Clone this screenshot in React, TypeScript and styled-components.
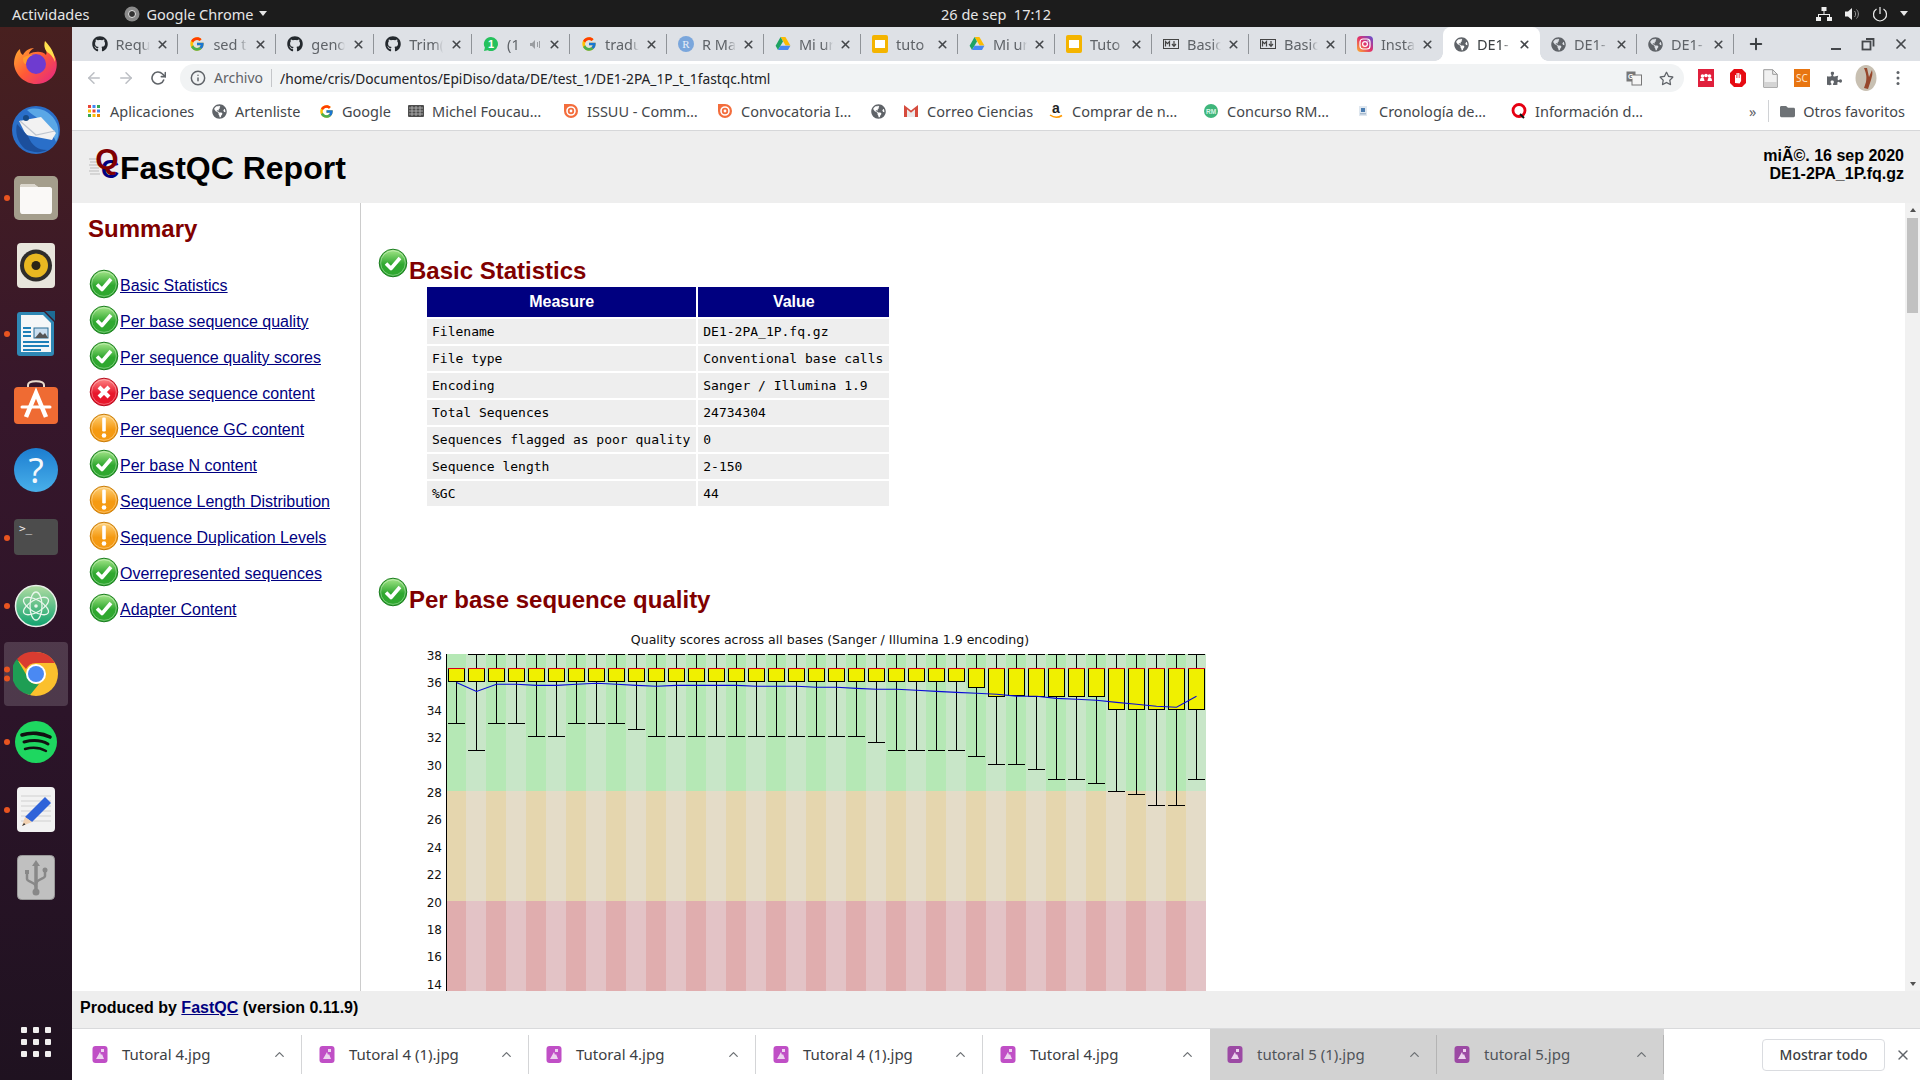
import React from "react";
import styled, { createGlobalStyle } from "styled-components";
import { FaGithub, FaGlobeAmericas, FaPuzzlePiece, FaFolder, FaRegStar } from "react-icons/fa";
import { FcGoogle } from "react-icons/fc";
import { FiArrowLeft, FiArrowRight, FiRotateCw, FiInfo, FiX, FiPlus, FiChevronUp } from "react-icons/fi";

const UI_FONT = `"Noto Sans", "Open Sans", sans-serif`;
const DOC_FONT = `"Liberation Sans", Arial, sans-serif`;

const GlobalStyle = createGlobalStyle`
  html, body { margin: 0; padding: 0; overflow: hidden; background: #fff; }
  * { box-sizing: border-box; }
`;

const Screen = styled.div`
  width: 1920px;
  height: 1080px;
  display: flex;
  flex-direction: column;
  overflow: hidden;
  font-family: ${UI_FONT};
`;

const TopBar = styled.div`
  height: 27px;
  flex: none;
  background: #1c1c1c;
  color: #e6e6e6;
  font-size: 14.5px;
  display: grid;
  grid-template-columns: 1fr auto 1fr;
  align-items: center;
  padding: 0 12px;
`;

const TopLeft = styled.div`
  display: flex;
  align-items: center;
`;

const TopApp = styled.div`
  display: flex;
  align-items: center;
  gap: 6px;
  margin-left: 35px;
`;

const Caret = styled.span`
  width: 0;
  height: 0;
  border-left: 4.5px solid transparent;
  border-right: 4.5px solid transparent;
  border-top: 5px solid #e6e6e6;
`;

const Clock = styled.span`
  margin-left: 72px;
`;

const TopRight = styled.div`
  display: flex;
  align-items: center;
  justify-content: flex-end;
  gap: 12px;
`;

const Body = styled.div`
  flex: 1;
  display: flex;
  min-height: 0;
`;

const Dock = styled.nav`
  width: 72px;
  flex: none;
  display: flex;
  flex-direction: column;
  padding-top: 1px;
  background: linear-gradient(180deg, #48201f 0%, #37172b 35%, #2c1429 65%, #1f1220 100%);
`;

const DockSlot = styled.div`
  position: relative;
  height: 68px;
  flex: none;
  display: flex;
  align-items: center;
  justify-content: center;
`;

const DockActive = styled(DockSlot)`
  &::before {
    content: "";
    position: absolute;
    left: 4px;
    right: 4px;
    top: 2px;
    bottom: 2px;
    border-radius: 4px;
    background: rgba(255, 255, 255, 0.16);
  }
  svg {
    position: relative;
  }
`;

const RunDots = styled.div`
  position: absolute;
  left: 4px;
  top: 50%;
  transform: translateY(-50%);
  display: flex;
  flex-direction: column;
  gap: 3px;
  z-index: 1;
`;

const RunDot = styled.span`
  width: 6px;
  height: 6px;
  border-radius: 50%;
  background: #e95420;
`;

const AppGrid = styled.div`
  margin-top: auto;
  margin-bottom: 23px;
  margin-left: 21px;
  display: grid;
  grid-template-columns: repeat(3, 6px);
  gap: 6px;
  span {
    width: 6px;
    height: 6px;
    border-radius: 1px;
    background: #f1efef;
  }
`;

const Browser = styled.div`
  flex: 1;
  min-width: 0;
  display: flex;
  flex-direction: column;
`;

const TabStrip = styled.div`
  height: 34px;
  flex: none;
  background: #dee1e6;
  display: flex;
  align-items: stretch;
  padding-left: 8.5px;
`;

const Tab = styled.div<{ $active?: boolean; $sep?: boolean; $w: number }>`
  position: relative;
  width: ${(p) => p.$w}px;
  flex: none;
  display: flex;
  align-items: center;
  padding-left: 11px;
  color: ${(p) => (p.$active ? "#3c4043" : "#5f6368")};
  background: ${(p) => (p.$active ? "#fff" : "transparent")};
  border-radius: 8px 8px 0 0;
  &::before {
    content: "";
    display: ${(p) => (p.$active ? "block" : "none")};
    position: absolute;
    left: -8px;
    right: -8px;
    bottom: 0;
    height: 8px;
    background:
      radial-gradient(circle at 0 0, transparent 7.5px, #fff 8px) left bottom / 8px 8px no-repeat,
      radial-gradient(circle at 100% 0, transparent 7.5px, #fff 8px) right bottom / 8px 8px no-repeat;
  }
  &::after {
    content: "";
    display: ${(p) => (p.$sep ? "block" : "none")};
    position: absolute;
    right: 0;
    top: 7px;
    bottom: 7px;
    width: 1px;
    background: #8f9398;
  }
`;

const TabTitle = styled.span`
  width: 34px;
  margin-left: 8px;
  font-size: 14.5px;
  white-space: nowrap;
  overflow: hidden;
  -webkit-mask-image: linear-gradient(90deg, #000 75%, transparent 100%);
  mask-image: linear-gradient(90deg, #000 75%, transparent 100%);
`;

const TabClose = styled(FiX)`
  position: absolute;
  left: 75.5px;
  top: 11px;
  width: 13px;
  height: 13px;
  stroke-width: 3;
  color: #44474b;
`;

const TabSound = styled.span`
  position: absolute;
  left: 58px;
  top: 12px;
  color: #9a9da1;
  display: flex;
`;

const NewTab = styled(FiPlus)`
  width: 18px;
  height: 18px;
  stroke-width: 2.6;
  color: #3c4043;
  align-self: center;
  margin-left: 13px;
`;

const WindowControls = styled.div`
  margin-left: auto;
  display: flex;
  align-items: center;
  gap: 18px;
  padding-right: 11px;
  color: #3c4043;
`;

const Toolbar = styled.div`
  height: 34px;
  flex: none;
  background: #fff;
  display: flex;
  align-items: center;
  padding: 0 6px;
  color: #5f6368;
`;

const ToolButton = styled.div<{ $muted?: boolean }>`
  width: 32px;
  height: 28px;
  flex: none;
  display: flex;
  align-items: center;
  justify-content: center;
  color: ${(p) => (p.$muted ? "#bcbfc4" : "#5f6368")};
`;

const AddressBar = styled.div`
  flex: 1;
  height: 28px;
  margin: 0 6px;
  border-radius: 14px;
  background: #f1f3f4;
  display: flex;
  align-items: center;
  padding: 0 2px 0 10px;
  font-size: 14px;
  min-width: 0;
`;

const Scheme = styled.span`
  margin-left: 8px;
  color: #5f6368;
  padding-right: 8px;
  border-right: 1px solid #c4c6c9;
  line-height: 18px;
`;

const Url = styled.span`
  margin-left: 8px;
  font-size: 13.75px;
  color: #202124;
  white-space: nowrap;
`;

const AddressEnd = styled.div`
  margin-left: auto;
  display: flex;
  align-items: center;
`;

const Bookmarks = styled.div`
  height: 36px;
  flex: none;
  background: #fff;
  border-bottom: 1px solid #d6d7d9;
  display: flex;
  align-items: center;
  padding: 0 15px 3px 14px;
  font-size: 14.5px;
  color: #44474b;
`;

const Bookmark = styled.div<{ $w: number }>`
  width: ${(p) => p.$w}px;
  flex: none;
  display: flex;
  align-items: center;
  gap: 8px;
  white-space: nowrap;
`;

const BookmarkEnd = styled.div`
  margin-left: auto;
  display: flex;
  align-items: center;
  white-space: nowrap;
  gap: 8px;
`;

const MoreMarks = styled.span`
  padding-right: 12px;
  margin-right: 3px;
  border-right: 1px solid #d0d2d5;
  line-height: 22px;
  color: #5f6368;
`;

const ReportHeader = styled.header`
  height: 72px;
  flex: none;
  background: #eee;
  display: flex;
  justify-content: space-between;
  font-family: ${DOC_FONT};
  color: #000;
  padding: 0 16px;
`;

const ReportTitle = styled.h1`
  margin: 0;
  padding-top: 18px;
  font-size: 32px;
  line-height: 38px;
  font-weight: bold;
  display: flex;
  align-items: flex-start;
`;

const LogoMark = styled.svg`
  width: 32px;
  height: 38px;
  margin-top: -2px;
  flex: none;
  overflow: visible;
`;

const ReportMeta = styled.div`
  padding-top: 16px;
  font-size: 16px;
  line-height: 18px;
  font-weight: bold;
  text-align: right;
`;

const Content = styled.div`
  flex: 1;
  min-height: 0;
  display: flex;
  background: #fff;
  font-family: ${DOC_FONT};
`;

const Summary = styled.aside`
  width: 289px;
  flex: none;
  border-right: 1px solid #ccc;
  padding: 12px 0 0 16px;
`;

const SummaryTitle = styled.h2`
  margin: 0 0 27px;
  font-size: 24px;
  line-height: 28px;
  font-weight: bold;
  color: #800000;
`;

const SummaryList = styled.ul`
  list-style: none;
  margin: 0;
  padding: 0;
  display: flex;
  flex-direction: column;
  gap: 7px;
`;

const SummaryRow = styled.li`
  height: 29px;
  padding-left: 1px;
  display: flex;
  align-items: flex-end;
  gap: 1px;
`;

const DocLink = styled.a`
  color: #000080;
  text-decoration: underline;
  font-size: 16px;
  line-height: 18px;
  margin-bottom: 4px;
`;

const Main = styled.main`
  flex: 1;
  min-width: 0;
  overflow: hidden;
  padding: 45px 0 0 17px;
`;

const Heading = styled.h2`
  margin: 0;
  height: 36px;
  display: flex;
  align-items: flex-start;
  gap: 1px;
  font-size: 24px;
  line-height: 28px;
  font-weight: bold;
  color: #800000;
  span {
    margin-top: 9px;
  }
`;

const StatsTable = styled.table`
  margin: 1px 0 69px 47px;
  border-spacing: 2px;
  border-collapse: separate;
  th {
    background: #000080;
    color: #fff;
    font-size: 16px;
    font-weight: bold;
    height: 30px;
    padding: 0 5px;
    line-height: 18px;
  }
  td {
    background: #eee;
    font-family: "DejaVu Sans Mono", monospace;
    font-size: 13px;
    height: 25px;
    padding: 0 6px 0 5px;
    line-height: 15px;
    white-space: nowrap;
  }
`;

const ChartFrame = styled.svg`
  display: block;
  margin: 7px 0 0 27px;
  width: 810px;
  height: 400px;
  font-family: "DejaVu Sans", sans-serif;
`;

const Scrollbar = styled.div`
  width: 15px;
  flex: none;
  background: #f1f1f1;
  display: flex;
  flex-direction: column;
  align-items: center;
  position: relative;
`;

const ScrollThumb = styled.div`
  width: 11px;
  height: 95px;
  margin-top: 15px;
  background: #c1c1c1;
`;

const ScrollArrow = styled.span<{ $down?: boolean }>`
  position: absolute;
  ${(p) => (p.$down ? "bottom: 5px;" : "top: 5px;")}
  width: 0;
  height: 0;
  border-left: 3.5px solid transparent;
  border-right: 3.5px solid transparent;
  ${(p) => (p.$down ? "border-top: 4px solid #505050;" : "border-bottom: 4px solid #505050;")}
`;

const ReportFooter = styled.footer`
  height: 38px;
  flex: none;
  background: #eee;
  border-bottom: 1px solid #d9dadc;
  font-family: ${DOC_FONT};
  font-size: 16px;
  font-weight: bold;
  color: #000;
  padding: 8px 0 0 8px;
  line-height: 18px;
  a {
    color: #000080;
  }
`;

const Shelf = styled.div`
  height: 51px;
  flex: none;
  background: #fff;
  display: flex;
  align-items: stretch;
  padding-left: 3px;
  font-size: 15px;
`;

const ShelfItem = styled.div<{ $dim?: boolean; $sep?: boolean }>`
  position: relative;
  width: 227px;
  flex: none;
  display: flex;
  align-items: center;
  padding-left: 17px;
  gap: 14px;
  padding-bottom: 1px;
  color: ${(p) => (p.$dim ? "#50555a" : "#3c4043")};
  background: ${(p) => (p.$dim ? "#d2d2d2" : "transparent")};
  &::after {
    content: "";
    display: ${(p) => (p.$sep ? "block" : "none")};
    position: absolute;
    right: 0;
    top: 6px;
    bottom: 6px;
    width: 1px;
    background: ${(p) => (p.$dim ? "#b4b4b4" : "#d4d5d7")};
  }
`;

const ShelfCaret = styled(FiChevronUp)`
  position: absolute;
  left: 197px;
  top: 18px;
  width: 15px;
  height: 15px;
  color: #6b6f73;
`;

const ShelfEnd = styled.div`
  margin-left: auto;
  display: flex;
  align-items: center;
  gap: 10px;
  padding-right: 9px;
`;

const ShowAll = styled.button`
  width: 123px;
  height: 32px;
  border: 1px solid #dadce0;
  border-radius: 4px;
  background: #fff;
  color: #3c4043;
  font-family: ${UI_FONT};
  font-size: 14px;
  font-weight: 500;
  padding: 0;
`;

const G = ({ size = 16 }: { size?: number }) => <FcGoogle size={size} />;

const Globe = ({ color = "#5f6368" }: { color?: string }) => <FaGlobeAmericas size={15} color={color} />;

const DriveIcon = () => (
  <svg width="16" height="16" viewBox="0 0 16 16">
    <path d="M5.6 1h4.8l5 8.6h-4.8z" fill="#fbbc04" />
    <path d="M5.6 1 .6 9.7 3 14l5-8.6z" fill="#1ea362" />
    <path d="M5.5 9.7h9.9L13 14H3z" fill="#4688f4" />
  </svg>
);

const SlidesIcon = () => (
  <svg width="16" height="18" viewBox="0 0 16 18">
    <rect width="16" height="18" rx="2" fill="#f4b400" />
    <rect x="3" y="5" width="10" height="8" fill="#fff" />
  </svg>
);

const MarkdownIcon = () => (
  <svg width="16" height="16" viewBox="0 0 16 16" fill="none">
    <rect x=".5" y="3.5" width="15" height="9" stroke="#444" />
    <path d="M2.5 10.5v-5l2 2.2 2-2.2v5" stroke="#444" strokeWidth="1.2" />
    <path d="M11 5v5M9 8l2 2.3L13 8" stroke="#444" strokeWidth="1.2" />
  </svg>
);

const InstagramIcon = () => (
  <svg width="16" height="16" viewBox="0 0 16 16" fill="none">
    <defs>
      <linearGradient id="ig" x1="0" y1="1" x2="1" y2="0">
        <stop offset="0" stopColor="#fdb42f" />
        <stop offset=".5" stopColor="#e1306c" />
        <stop offset="1" stopColor="#5b51d8" />
      </linearGradient>
    </defs>
    <rect width="16" height="16" rx="4" fill="url(#ig)" />
    <rect x="3" y="3" width="10" height="10" rx="3" stroke="#fff" strokeWidth="1.2" />
    <circle cx="8" cy="8" r="2.4" stroke="#fff" strokeWidth="1.2" />
    <circle cx="11" cy="5" r=".7" fill="#fff" />
  </svg>
);

const WhatsIcon = () => (
  <svg width="16" height="16" viewBox="0 0 16 16">
    <path d="M8 1a7 7 0 1 1-3.3 13.2L1 15l.9-3.4A7 7 0 0 1 8 1z" fill="#25c15c" />
    <text x="8" y="12" fontSize="11" fontWeight="bold" fontFamily="Liberation Sans" textAnchor="middle" fill="#fff">1</text>
  </svg>
);

const RIcon = () => (
  <svg width="16" height="16" viewBox="0 0 16 16">
    <circle cx="8" cy="8" r="8" fill="#7aa6dc" />
    <text x="8" y="12" fontSize="11" fontFamily="Liberation Serif" textAnchor="middle" fill="#e8eef8">R</text>
  </svg>
);

const ImageFileIcon = ({ dim }: { dim?: boolean }) => (
  <svg width="16" height="17" viewBox="0 0 16 17">
    <rect x=".5" width="15" height="17" rx="3" fill={dim ? "#9c4aa4" : "#c04fc6"} />
    <path d="M4 13 8 6l1 3 1-1 2 5z" fill="#ecd3ee" />
    <rect x="9" y="3" width="3" height="3" fill="#ecd3ee" />
  </svg>
);

type TabData = { title: string; icon: React.ReactNode; sep?: boolean; active?: boolean; sound?: boolean };

const tabs: TabData[] = [
  { title: "Requ", icon: <FaGithub size={16} color="#24292e" />, sep: true },
  { title: "sed t", icon: <G />, sep: true },
  { title: "geno", icon: <FaGithub size={16} color="#24292e" />, sep: true },
  { title: "Trim(", icon: <FaGithub size={16} color="#24292e" />, sep: true },
  { title: "(1", icon: <WhatsIcon />, sep: true, sound: true },
  { title: "tradu", icon: <G />, sep: true },
  { title: "R Ma", icon: <RIcon />, sep: true },
  { title: "Mi ur", icon: <DriveIcon />, sep: true },
  { title: "tuto", icon: <SlidesIcon />, sep: true },
  { title: "Mi ur", icon: <DriveIcon />, sep: true },
  { title: "Tuto", icon: <SlidesIcon />, sep: true },
  { title: "Basic", icon: <MarkdownIcon />, sep: true },
  { title: "Basic", icon: <MarkdownIcon />, sep: true },
  { title: "Insta", icon: <InstagramIcon /> },
  { title: "DE1-", icon: <Globe />, active: true },
  { title: "DE1-", icon: <Globe />, sep: true },
  { title: "DE1-", icon: <Globe />, sep: true },
];

const IssuuIcon = () => (
  <svg width="16" height="18" viewBox="0 0 16 18" fill="none">
    <path d="M1 2h7a7 7 0 1 1-7 7z" fill="#f36d3c" />
    <circle cx="8" cy="9" r="4" stroke="#fff" strokeWidth="1.6" />
    <circle cx="8" cy="9" r="1.4" fill="#fff" />
  </svg>
);

const marks: { w: number; label?: string; icon: React.ReactNode }[] = [
  {
    w: 126,
    label: "Aplicaciones",
    icon: (
      <svg width="16" height="16" viewBox="0 0 16 16">
        {[0, 1, 2].map((r) =>
          [0, 1, 2].map((c) => (
            <rect
              key={`${r}${c}`}
              x={2 + c * 4.5}
              y={2 + r * 4.5}
              width="3"
              height="3"
              fill={["#ea4335", "#4285f4", "#34a853", "#fbbc04", "#ea4335", "#4285f4", "#34a853", "#fbbc04", "#ea8600"][r * 3 + c]}
            />
          ))
        )}
      </svg>
    ),
  },
  { w: 107, label: "Artenliste", icon: <Globe /> },
  { w: 89, label: "Google", icon: <G size={15} /> },
  {
    w: 155,
    label: "Michel Foucau…",
    icon: (
      <svg width="16" height="12" viewBox="0 0 16 12">
        <rect width="16" height="12" rx="1" fill="#4d4d4d" />
        <path d="M1 3h14M1 6h14M1 9h14M4 1v10M8 1v10M12 1v10" stroke="#bbb" strokeWidth=".8" />
      </svg>
    ),
  },
  { w: 154, label: "ISSUU - Comm…", icon: <IssuuIcon /> },
  { w: 154, label: "Convocatoria I…", icon: <IssuuIcon /> },
  { w: 32, icon: <Globe /> },
  {
    w: 145,
    label: "Correo Ciencias",
    icon: (
      <svg width="16" height="14" viewBox="0 0 16 14">
        <path d="M1 1v12h3V5.500L8 9l4-3.500V13h3V1L8 6.500z" fill="#d54b3d" />
        <path d="M4 13V5.500L8 9l4-3.500V13z" fill="#e9e9e9" />
      </svg>
    ),
  },
  {
    w: 155,
    label: "Comprar de n…",
    icon: (
      <svg width="16" height="18" viewBox="0 0 16 18" fill="none">
        <text x="8" y="11" fontSize="14" fontWeight="bold" fontFamily="Liberation Sans" textAnchor="middle" fill="#222">a</text>
        <path d="M2 13c4 3 8 3 12 .5" stroke="#f90" strokeWidth="1.5" />
      </svg>
    ),
  },
  {
    w: 152,
    label: "Concurso RM…",
    icon: (
      <svg width="16" height="16" viewBox="0 0 16 16">
        <circle cx="8" cy="8" r="7" fill="#3fb67b" />
        <text x="8" y="10.5" fontSize="6.5" fontWeight="bold" fontFamily="Liberation Sans" textAnchor="middle" fill="#d9f5e6">RM</text>
      </svg>
    ),
  },
  {
    w: 156,
    label: "Cronología de…",
    icon: (
      <svg width="16" height="12" viewBox="0 0 16 12">
        <rect x="4" y="1" width="8" height="10" fill="#dfe7ef" />
        <rect x="6" y="3" width="4" height="4" fill="#4b7db1" />
        <rect x="5" y="8" width="6" height="1.5" fill="#a9bcd0" />
      </svg>
    ),
  },
  {
    w: 132,
    label: "Información d…",
    icon: (
      <svg width="16" height="18" viewBox="0 0 16 18" fill="none">
        <circle cx="8" cy="8.5" r="6" stroke="#e60012" strokeWidth="2.8" />
        <path d="M9 12l4 4" stroke="#111" strokeWidth="2" />
      </svg>
    ),
  },
];

const Extensions = () => (
  <>
    <ToolButton>
      <svg width="16" height="18" viewBox="0 0 16 18">
        <rect width="16" height="18" fill="#e0203c" />
        <circle cx="4.5" cy="7" r="1.8" fill="#fff" />
        <circle cx="8" cy="6.5" r="1.8" fill="#fff" />
        <circle cx="11.5" cy="7" r="1.8" fill="#fff" />
        <path d="M2 12c0-3 1-3.500 2.500-3.500S6 10 6.500 12h3C10 10 10 8.500 11.500 8.500S14 9 14 12z" fill="#fff" />
      </svg>
    </ToolButton>
    <ToolButton>
      <svg width="18" height="20" viewBox="0 0 18 20">
        <path d="M5 1h8l4 4v10l-4 4H5l-4-4V5z" fill="#e60b12" />
        <path d="M6 15V7h1v3h.5V5h1.200v5h.5V5h1.200v5h.5V6.500h1.200V13l-1.500 2.500z" fill="#fff" />
      </svg>
    </ToolButton>
    <ToolButton>
      <svg width="15" height="19" viewBox="0 0 15 19" fill="none">
        <path d="M.7.700h9l4.600 4.600v13H.7z" fill="#f1f1f1" stroke="#9a9a9a" />
        <path d="M9.700.700v4.600h4.600" stroke="#9a9a9a" />
        <rect x="1" y="13" width="13" height="5" fill="#d4d4d4" />
      </svg>
    </ToolButton>
    <ToolButton>
      <svg width="16" height="18" viewBox="0 0 16 18">
        <rect width="16" height="18" fill="#e87511" />
        <text x="8" y="13" fontSize="10" fontFamily="Noto Sans" textAnchor="middle" fill="#ffe4c8">SC</text>
      </svg>
    </ToolButton>
    <ToolButton>
      <FaPuzzlePiece size={15} color="#5f6368" />
    </ToolButton>
    <ToolButton>
      <svg width="22" height="26" viewBox="0 0 22 26" fill="none">
        <ellipse cx="11" cy="13" rx="10.5" ry="13" fill="#c8c0b2" />
        <path d="M9 3c2 5 3 8 2 14l-2 6 4 1 3-9c1-4 2-6 1-10l-3 7-2-9z" fill="#96472c" />
      </svg>
    </ToolButton>
    <ToolButton>
      <svg width="4" height="16" viewBox="0 0 4 16" fill="#5f6368">
        <circle cx="2" cy="2.5" r="1.5" />
        <circle cx="2" cy="8" r="1.5" />
        <circle cx="2" cy="13.5" r="1.5" />
      </svg>
    </ToolButton>
  </>
);

type Status = "ok" | "fail" | "warn";

const statusColors: Record<Status, [string, string, string]> = {
  ok: ["#a8e88c", "#2fa82f", "#1a7d1f"],
  fail: ["#ff8a8a", "#e8172b", "#b50d1e"],
  warn: ["#ffd27a", "#f59a12", "#c97c08"],
};

const StatusIcon = ({ kind }: { kind: Status }) => {
  const [top, mid, edge] = statusColors[kind];
  const id = `status-${kind}`;
  return (
    <svg width="30" height="30" viewBox="0 0 30 30" style={{ flex: "none" }}>
      <defs>
        <linearGradient id={id} x1="0" y1="0" x2="0" y2="1">
          <stop offset="0" stopColor={top} />
          <stop offset=".55" stopColor={mid} />
          <stop offset="1" stopColor={mid} />
        </linearGradient>
      </defs>
      <circle cx="15" cy="15" r="13.8" fill={`url(#${id})`} stroke={edge} strokeWidth="1" />
      <circle cx="15" cy="15" r="12.3" fill="none" stroke="#fff" strokeOpacity=".35" strokeWidth="1" />
      {kind === "ok" && <path d="M8 15.5l5 5 9-10.5" fill="none" stroke="#fff" strokeWidth="3.6" strokeLinejoin="round" />}
      {kind === "fail" && <path d="M10 10l10 10M20 10L10 20" fill="none" stroke="#fff" strokeWidth="4" />}
      {kind === "warn" && (
        <>
          <rect x="13.2" y="4.5" width="3.6" height="14" rx="1.2" fill="#fff" />
          <circle cx="15" cy="22.5" r="2.3" fill="#fff" />
        </>
      )}
    </svg>
  );
};

const modules: { name: string; status: Status }[] = [
  { name: "Basic Statistics", status: "ok" },
  { name: "Per base sequence quality", status: "ok" },
  { name: "Per sequence quality scores", status: "ok" },
  { name: "Per base sequence content", status: "fail" },
  { name: "Per sequence GC content", status: "warn" },
  { name: "Per base N content", status: "ok" },
  { name: "Sequence Length Distribution", status: "warn" },
  { name: "Sequence Duplication Levels", status: "warn" },
  { name: "Overrepresented sequences", status: "ok" },
  { name: "Adapter Content", status: "ok" },
];

const stats = [
  ["Filename", "DE1-2PA_1P.fq.gz"],
  ["File type", "Conventional base calls"],
  ["Encoding", "Sanger / Illumina 1.9"],
  ["Total Sequences", "24734304"],
  ["Sequences flagged as poor quality", "0"],
  ["Sequence length", "2-150"],
  ["%GC", "44"],
];

const lows = [33, 31, 33, 33, 32, 32, 33, 33, 33, 32.5, 32, 32, 32, 32, 32, 32, 32, 32, 32, 32, 32, 31.6, 31, 31, 31, 31, 30.55, 30, 30, 29.6, 28.9, 28.9, 28.55, 28, 27.75, 27, 27, 28.9];
const bottoms = [36, 36, 36, 36, 36, 36, 36, 36, 36, 36, 36, 36, 36, 36, 36, 36, 36, 36, 36, 36, 36, 36, 36, 36, 36, 36, 35.6, 34.9, 35, 34.9, 34.9, 34.9, 34.9, 34, 34, 34, 34, 34];
const means = [35.93, 35.27, 35.79, 35.79, 35.71, 35.71, 35.79, 35.86, 35.79, 35.71, 35.64, 35.71, 35.71, 35.71, 35.71, 35.64, 35.64, 35.64, 35.57, 35.57, 35.49, 35.42, 35.42, 35.35, 35.27, 35.2, 35.13, 35.06, 34.93, 34.91, 34.76, 34.69, 34.62, 34.47, 34.33, 34.18, 34.11, 34.91];

const PLOT_X = 41;
const yOf = (v: number) => 34 + (38 - v) * 13.7;

const QualityChart = () => {
  const ticks = [38, 36, 34, 32, 30, 28, 26, 24, 22, 20, 18, 16, 14];
  const line = means.map((m, i) => `${PLOT_X + 10.5 + i * 20},${yOf(m).toFixed(1)}`).join(" ");
  return (
    <ChartFrame viewBox="0 0 810 400">
      <text x="425" y="24" fontSize="12.55" textAnchor="middle" fill="#111">
        Quality scores across all bases (Sanger / Illumina 1.9 encoding)
      </text>
      <g shapeRendering="crispEdges">
        {lows.map((_, i) => (
          <g key={i}>
            <rect x={PLOT_X + i * 20} y={34} width="20" height={137} fill={i % 2 ? "#c8e6c8" : "#b5e8b5"} />
            <rect x={PLOT_X + i * 20} y={171} width="20" height={110} fill={i % 2 ? "#e4dcc8" : "#e5d6ae"} />
            <rect x={PLOT_X + i * 20} y={281} width="20" height={110} fill={i % 2 ? "#e3c3c6" : "#e0adae"} />
          </g>
        ))}
        <rect x={PLOT_X} y={34} width="1" height="366" fill="#000" />
        {lows.map((low, i) => {
          const cx = PLOT_X + 10 + i * 20;
          return (
            <g key={i} fill="#000">
              {i > 0 && <rect x={cx - 8.5} y={34} width="17" height="1" />}
              {i > 0 && <rect x={cx} y={34} width="1" height={14} />}
              <rect x={cx} y={yOf(bottoms[i])} width="1" height={yOf(low) - yOf(bottoms[i])} />
              <rect x={cx - 8.5} y={yOf(low)} width="17" height="1" />
              <rect x={cx - 8} y={48} width="17" height={yOf(bottoms[i]) - 48 + 1} fill="#000" />
              <rect x={cx - 7} y={49} width="15" height={yOf(bottoms[i]) - 49} fill="#f0f000" />
              <rect x={cx - 8} y={48} width="17" height="1" fill="#d40020" />
            </g>
          );
        })}
      </g>
      <polyline points={line} fill="none" stroke="#0a0ad8" strokeWidth="1.1" />
      {ticks.map((t) => (
        <text key={t} x={PLOT_X - 4} y={yOf(t) + 6} fontSize="12" textAnchor="end" fill="#111">
          {t}
        </text>
      ))}
    </ChartFrame>
  );
};

const DockItem = ({ dots = 0, active, children }: { dots?: number; active?: boolean; children: React.ReactNode }) => {
  const Slot = active ? DockActive : DockSlot;
  return (
    <Slot>
      {dots > 0 && (
        <RunDots>
          {Array.from({ length: dots }).map((_, i) => (
            <RunDot key={i} />
          ))}
        </RunDots>
      )}
      {children}
    </Slot>
  );
};

const FirefoxIcon = () => (
  <svg width="48" height="48" viewBox="0 0 48 48">
    <defs>
      <linearGradient id="ffx" x1="0" y1="0" x2="1" y2="1">
        <stop offset="0" stopColor="#ffbd2e" />
        <stop offset=".5" stopColor="#ff5a36" />
        <stop offset="1" stopColor="#e3218b" />
      </linearGradient>
    </defs>
    <path d="M33 3c1 5 4 7 7 11 4 5 6 11 4 18-2 8-10 14-20 14C13 46 3 37 2 26c0-6 2-12 6-15 0 3 1 5 3 6 2-4 6-7 11-7-3 2-5 4-5 6 6-3 14-3 17 1C36 13 32 8 33 3z" fill="url(#ffx)" />
    <path d="M33 3c5 5 10 12 10 21-2-5-4-8-8-10-3-4-3-7-2-11z" fill="#ffe14d" />
    <circle cx="24" cy="26" r="10" fill="#6e3bd0" />
    <path d="M14 26c0-4 3-8 7-9-3 0-6 0-10 3 0 4 1 6 3 6z" fill="#ff9a2e" />
  </svg>
);

const ThunderbirdIcon = () => (
  <svg width="50" height="48" viewBox="0 0 50 48">
    <circle cx="25" cy="24" r="24" fill="#2a6fc9" />
    <path d="M16 4c10-4 24 0 30 14 2 6 2 13-1 18-3-8-8-16-16-22C24 10 20 8 16 4z" fill="#5aa7e6" />
    <path d="M8 15l22-4 15 16-4 7-26-5z" fill="#f2f2f2" />
    <path d="M9 15l16 14 19-4" fill="none" stroke="#bfc6cf" strokeWidth="1.2" />
    <path d="M6 18c-2 8 0 18 8 25 8 4 16 4 22 1-9 0-15-4-19-14z" fill="#1c4f9c" />
    <circle cx="15" cy="12" r="3" fill="#164a86" />
  </svg>
);

const FilesIcon = () => (
  <svg width="46" height="46" viewBox="0 0 46 46">
    <rect x="1" y="1" width="44" height="44" rx="5" fill="#a49e8c" />
    <path d="M7 11c0-1 1-2 2-2h12l4 3h12c1 0 2 1 2 2v22c0 2-1 3-2 3H9c-1 0-2-1-2-3z" fill="#faf9f7" />
    <path d="M7 11c0-1 1-2 2-2h12l4 3H7z" fill="#dad6cc" />
  </svg>
);

const RhythmIcon = () => (
  <svg width="38" height="46" viewBox="0 0 38 46">
    <rect width="38" height="45" rx="4" fill="#e8e5dc" />
    <circle cx="19" cy="22.5" r="16" fill="#2f2d2b" />
    <circle cx="19" cy="22.5" r="12" fill="#e9b821" />
    <circle cx="19" cy="22.5" r="4.5" fill="#2a2416" />
  </svg>
);

const WriterIcon = () => (
  <svg width="38" height="46" viewBox="0 0 38 46">
    <path d="M3 1h24l10 10v31c0 2-1 3-3 3H3c-2 0-3-1-3-3V4c0-2 1-3 3-3z" fill="#2f88b5" />
    <path d="M4 4h22l8 8v29H4z" fill="#f5f7f8" />
    <path d="M28 0l10 10V0z" fill="#1d6c95" />
    <path d="M6 17h8M6 21h8M6 25h8M6 31h26M6 35h26M6 39h18" stroke="#1f80b8" strokeWidth="2" />
    <rect x="17" y="17" width="14" height="10" fill="#cbdff0" stroke="#2a6f96" />
    <path d="M18 27l5-6 3 3 2-2 3 5z" fill="#555" />
  </svg>
);

const SoftwareIcon = () => (
  <svg width="46" height="46" viewBox="0 0 46 46" fill="none">
    <path d="M15 10V6c0-5 16-5 16 0v4" stroke="#eadccd" strokeWidth="2" />
    <rect x="1" y="8" width="44" height="37" rx="4" fill="#ef6b33" />
    <path d="M13 38l10-24 10 24" stroke="#fff" strokeWidth="4.5" />
    <path d="M9 28h28" stroke="#fff" strokeWidth="3" strokeLinecap="round" />
  </svg>
);

const HelpIcon = () => (
  <svg width="46" height="46" viewBox="0 0 46 46">
    <defs>
      <linearGradient id="hlp" x1="0" y1="0" x2="0" y2="1">
        <stop offset="0" stopColor="#1c7dd0" />
        <stop offset="1" stopColor="#49b0ea" />
      </linearGradient>
    </defs>
    <circle cx="23" cy="23" r="22" fill="url(#hlp)" />
    <text x="23" y="36" fontSize="35" fontFamily="Noto Sans" textAnchor="middle" fill="#f4f8fb">?</text>
  </svg>
);

const TerminalIcon = () => (
  <svg width="46" height="38" viewBox="0 0 46 38">
    <rect x="1" width="44" height="36" rx="4" fill="#4c4c4c" />
    <text x="6" y="13" fontSize="11" fontFamily="DejaVu Sans Mono" fill="#f0f0f0">&gt;_</text>
  </svg>
);

const AtomIcon = () => (
  <svg width="44" height="44" viewBox="0 0 44 44" fill="none">
    <defs>
      <linearGradient id="atm" x1="0" y1="0" x2="0" y2="1">
        <stop offset="0" stopColor="#b1dca2" />
        <stop offset="1" stopColor="#0fa36f" />
      </linearGradient>
    </defs>
    <circle cx="22" cy="22" r="20.5" fill="url(#atm)" stroke="#e8efe9" strokeWidth="1.5" />
    <g stroke="#eaf6ec" strokeWidth="1.3">
      <ellipse cx="22" cy="22" rx="14" ry="6" transform="rotate(30 22 22)" />
      <ellipse cx="22" cy="22" rx="14" ry="6" transform="rotate(90 22 22)" />
      <ellipse cx="22" cy="22" rx="14" ry="6" transform="rotate(150 22 22)" />
    </g>
    <circle cx="22" cy="22" r="1.8" fill="#eaf6ec" />
  </svg>
);

const ChromeIcon = () => (
  <svg width="46" height="46" viewBox="0 0 46 46">
    <circle cx="23" cy="23" r="22" fill="#fbc02d" />
    <path d="M23 1a22 22 0 0 1 19 11H23a11 11 0 0 0-10 6L4 8a22 22 0 0 1 19-7z" fill="#d93c30" />
    <path d="M4 8l10 17a10 10 0 0 0 12 8l-9 11A22 22 0 0 1 4 8z" fill="#1e9e54" />
    <circle cx="23" cy="23" r="10" fill="#fff" />
    <circle cx="23" cy="23" r="8" fill="#4a89f3" />
  </svg>
);

const SpotifyIcon = () => (
  <svg width="44" height="44" viewBox="0 0 44 44" fill="none">
    <circle cx="22" cy="22" r="21" fill="#1ed760" />
    <path d="M8 15c9-3 20-2 28 2" stroke="#111" strokeWidth="3.6" strokeLinecap="round" />
    <path d="M10 22c8-2 17-2 24 2" stroke="#111" strokeWidth="3" strokeLinecap="round" />
    <path d="M11 29c7-2 14-2 21 2" stroke="#111" strokeWidth="2.4" strokeLinecap="round" />
  </svg>
);

const EditorIcon = () => (
  <svg width="38" height="46" viewBox="0 0 38 46" fill="none">
    <rect width="38" height="45" rx="4" fill="#f2f2f2" />
    <path d="M4 9h30M4 14h30M4 19h30M4 24h30M4 29h30M4 34h30" stroke="#d0d0d0" />
    <path d="M28 10l6 6-19 19-7-5z" fill="#2f63d9" />
    <path d="M8 30l7 5-10 4z" fill="#f1d1b1" />
    <path d="M5 39l2-3 1.5 1.5z" fill="#333" />
  </svg>
);

const UsbIcon = () => (
  <svg width="38" height="46" viewBox="0 0 38 46" fill="none">
    <rect x=".5" y=".5" width="37" height="44" rx="4" fill="#c0c0c0" stroke="#999" />
    <path d="M19 37V9" stroke="#888" strokeWidth="3.5" />
    <path d="M19 5l-4 6h8z" fill="#888" />
    <path d="M10 19v5c0 3 9 3 9 8M28 17v4c0 3-9 3-9 8" stroke="#888" strokeWidth="2.5" />
    <rect x="8" y="15" width="4" height="4" fill="#888" />
    <circle cx="28" cy="15" r="2.5" fill="#888" />
    <circle cx="19" cy="37" r="3.5" fill="#888" />
  </svg>
);

const dock: { dots?: number; active?: boolean; icon: React.ReactNode }[] = [
  { icon: <FirefoxIcon /> },
  { icon: <ThunderbirdIcon /> },
  { dots: 1, icon: <FilesIcon /> },
  { icon: <RhythmIcon /> },
  { dots: 1, icon: <WriterIcon /> },
  { icon: <SoftwareIcon /> },
  { icon: <HelpIcon /> },
  { dots: 1, icon: <TerminalIcon /> },
  { dots: 1, icon: <AtomIcon /> },
  { dots: 2, active: true, icon: <ChromeIcon /> },
  { dots: 1, icon: <SpotifyIcon /> },
  { dots: 1, icon: <EditorIcon /> },
  { icon: <UsbIcon /> },
];

const downloads = [
  { name: "Tutoral 4.jpg" },
  { name: "Tutoral 4 (1).jpg" },
  { name: "Tutoral 4.jpg" },
  { name: "Tutoral 4 (1).jpg" },
  { name: "Tutoral 4.jpg" },
  { name: "tutoral 5 (1).jpg", dim: true },
  { name: "tutoral 5.jpg", dim: true },
];

export default function App() {
  return (
    <Screen>
      <GlobalStyle />
      <TopBar>
        <TopLeft>
          Actividades
          <TopApp>
            <svg width="16" height="16" viewBox="0 0 16 16">
              <circle cx="8" cy="8" r="7.5" fill="#8a8a8a" />
              <circle cx="8" cy="8" r="3.5" fill="#333" stroke="#e4e4e4" />
            </svg>
            Google Chrome
            <Caret />
          </TopApp>
        </TopLeft>
        <Clock>26 de sep&nbsp;&nbsp;17:12</Clock>
        <TopRight>
          <svg width="16" height="16" viewBox="0 0 16 16" fill="#eee">
            <rect x="5.5" y="1" width="5" height="4" />
            <rect x="0" y="11" width="5" height="4" />
            <rect x="11" y="11" width="5" height="4" />
            <path d="M7.5 5h1v3H14v3h-1V9H3v2H2V8h5.500z" />
          </svg>
          <svg width="16" height="16" viewBox="0 0 16 16" fill="none">
            <path d="M1 5.500h3L8 2v12l-4-3.500H1z" fill="#eee" />
            <path d="M10.500 5c1.500 1.500 1.500 4.500 0 6M12.500 3.500c2.500 2.500 2.500 6.500 0 9" stroke="#999" />
          </svg>
          <svg width="16" height="16" viewBox="0 0 16 16" fill="none" stroke="#eee" strokeWidth="1.2">
            <path d="M4.500 3a6.500 6.500 0 1 0 7 0M8 1v7" />
          </svg>
          <Caret />
        </TopRight>
      </TopBar>
      <Body>
        <Dock>
          {dock.map((d, i) => (
            <DockItem key={i} dots={d.dots} active={d.active}>
              {d.icon}
            </DockItem>
          ))}
          <AppGrid>
            {Array.from({ length: 9 }).map((_, i) => (
              <span key={i} />
            ))}
          </AppGrid>
        </Dock>
        <Browser>
          <TabStrip>
            {tabs.map((t, i) => (
              <Tab key={i} $active={t.active} $sep={t.sep} $w={i < 5 ? 97.9 : 97}>
                {t.icon}
                <TabTitle>{t.title}</TabTitle>
                {t.sound && (
                  <TabSound>
                    <svg width="11" height="11" viewBox="0 0 11 11" fill="currentColor">
                      <path d="M0 4h2l3-3v9L2 7H0zM7 3v5h1V3zM9 2v7h1V2z" />
                    </svg>
                  </TabSound>
                )}
                <TabClose />
              </Tab>
            ))}
            <NewTab />
            <WindowControls>
              <svg width="14" height="14" viewBox="0 0 14 14" fill="#44474b">
                <rect x="2" y="11" width="10" height="2" />
              </svg>
              <svg width="14" height="14" viewBox="0 0 14 14" fill="none" stroke="#44474b" strokeWidth="1.8">
                <rect x="1.5" y="4.5" width="8" height="8" />
                <path d="M5 2h7.500v7.500" />
              </svg>
              <FiX size={16} strokeWidth={2.6} color="#44474b" />
            </WindowControls>
          </TabStrip>
          <Toolbar>
            <ToolButton $muted>
              <FiArrowLeft size={18} />
            </ToolButton>
            <ToolButton $muted>
              <FiArrowRight size={18} />
            </ToolButton>
            <ToolButton>
              <FiRotateCw size={16} strokeWidth={2.4} />
            </ToolButton>
            <AddressBar>
              <FiInfo size={16} strokeWidth={2.2} />
              <Scheme>Archivo</Scheme>
              <Url>/home/cris/Documentos/EpiDiso/data/DE/test_1/DE1-2PA_1P_t_1fastqc.html</Url>
              <AddressEnd>
                <ToolButton>
                  <svg width="16" height="16" viewBox="0 0 16 16" fill="none">
                    <rect x=".5" y="1.5" width="9" height="10" fill="#777" />
                    <rect x="6" y="5" width="9.500" height="10" fill="#f5f5f5" stroke="#777" />
                    <text x="2" y="9" fontSize="7" fontWeight="bold" fontFamily="Liberation Sans" fill="#fff">G</text>
                  </svg>
                </ToolButton>
                <ToolButton>
                  <FaRegStar size={15} />
                </ToolButton>
              </AddressEnd>
            </AddressBar>
            <Extensions />
          </Toolbar>
          <Bookmarks>
            {marks.map((m, i) => (
              <Bookmark key={i} $w={m.w}>
                {m.icon}
                {m.label && <span>{m.label}</span>}
              </Bookmark>
            ))}
            <BookmarkEnd>
              <MoreMarks>»</MoreMarks>
              <FaFolder size={15} color="#6e7276" />
              Otros favoritos
            </BookmarkEnd>
          </Bookmarks>
          <ReportHeader>
            <ReportTitle>
              <LogoMark viewBox="0 0 32 38">
                <path d="M1 12h9M2 15h8M1 18h9M2 21h9M1 24h10M2 27h10" stroke="#bbb" strokeWidth="1" />
                <text x="22" y="31" fontSize="25" fontWeight="bold" fontFamily="Liberation Sans" textAnchor="middle" fill="#000080">C</text>
                <text x="19" y="22" fontSize="30" fontWeight="bold" fontFamily="Liberation Sans" textAnchor="middle" fill="#800000">Q</text>
              </LogoMark>
              FastQC Report
            </ReportTitle>
            <ReportMeta>
              miÃ©. 16 sep 2020
              <br />
              DE1-2PA_1P.fq.gz
            </ReportMeta>
          </ReportHeader>
          <Content>
            <Summary>
              <SummaryTitle>Summary</SummaryTitle>
              <SummaryList>
                {modules.map((m) => (
                  <SummaryRow key={m.name}>
                    <StatusIcon kind={m.status} />
                    <DocLink href="#">{m.name}</DocLink>
                  </SummaryRow>
                ))}
              </SummaryList>
            </Summary>
            <Main>
              <Heading>
                <StatusIcon kind="ok" />
                <span>Basic Statistics</span>
              </Heading>
              <StatsTable>
                <thead>
                  <tr>
                    <th>Measure</th>
                    <th>Value</th>
                  </tr>
                </thead>
                <tbody>
                  {stats.map(([k, v]) => (
                    <tr key={k}>
                      <td>{k}</td>
                      <td>{v}</td>
                    </tr>
                  ))}
                </tbody>
              </StatsTable>
              <Heading>
                <StatusIcon kind="ok" />
                <span>Per base sequence quality</span>
              </Heading>
              <QualityChart />
            </Main>
            <Scrollbar>
              <ScrollArrow />
              <ScrollThumb />
              <ScrollArrow $down />
            </Scrollbar>
          </Content>
          <ReportFooter>
            Produced by <a href="#">FastQC</a> (version 0.11.9)
          </ReportFooter>
          <Shelf>
            {downloads.map((d, i) => (
              <ShelfItem key={i} $dim={d.dim} $sep={i !== 4}>
                <ImageFileIcon dim={d.dim} />
                {d.name}
                <ShelfCaret />
              </ShelfItem>
            ))}
            <ShelfEnd>
              <ShowAll>Mostrar todo</ShowAll>
              <FiX size={16} color="#5f6368" />
            </ShelfEnd>
          </Shelf>
        </Browser>
      </Body>
    </Screen>
  );
}
